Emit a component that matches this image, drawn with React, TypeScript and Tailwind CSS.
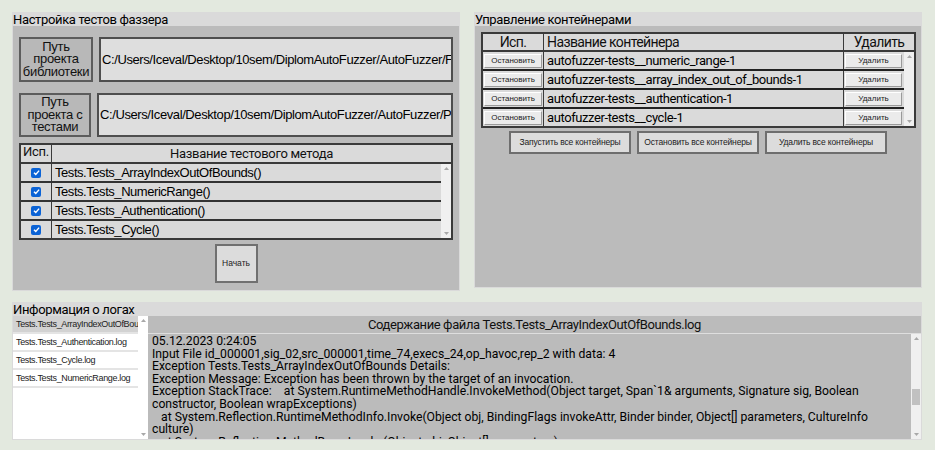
import React from 'react';

const tests = [
  'Tests.Tests_ArrayIndexOutOfBounds()',
  'Tests.Tests_NumericRange()',
  'Tests.Tests_Authentication()',
  'Tests.Tests_Cycle()',
];

const containers = [
  'autofuzzer-tests__numeric_range-1',
  'autofuzzer-tests__array_index_out_of_bounds-1',
  'autofuzzer-tests__authentication-1',
  'autofuzzer-tests__cycle-1',
];

const logFiles = [
  'Tests.Tests_ArrayIndexOutOfBounds.log',
  'Tests.Tests_Authentication.log',
  'Tests.Tests_Cycle.log',
  'Tests.Tests_NumericRange.log',
];

const logLines = [
  '05.12.2023 0:24:05',
  'Input File id_000001,sig_02,src_000001,time_74,execs_24,op_havoc,rep_2 with data: 4',
  'Exception Tests.Tests_ArrayIndexOutOfBounds Details:',
  'Exception Message: Exception has been thrown by the target of an invocation.',
  'Exception StackTrace:    at System.RuntimeMethodHandle.InvokeMethod(Object target, Span`1& arguments, Signature sig, Boolean',
  'constructor, Boolean wrapExceptions)',
  '   at System.Reflection.RuntimeMethodInfo.Invoke(Object obj, BindingFlags invokeAttr, Binder binder, Object[] parameters, CultureInfo',
  'culture)',
  '   at System.Reflection.MethodBase.Invoke(Object obj, Object[] parameters)',
];

const Arrow = ({ down }: { down?: boolean }) => (
  <svg width="5" height="3" viewBox="0 0 5 3">
    <path d={down ? 'M0 0 L2.5 3 L5 0Z' : 'M0 3 L2.5 0 L5 3Z'} fill="#a8a8a8" />
  </svg>
);

// simple fake scrollbar, no thumbTop -> no thumb
const ScrollBar = ({ bg = 'bg-[#f0f0f0]', thumbTop }: { bg?: string; thumbTop?: number }) => (
  <div className={`w-[10px] shrink-0 flex flex-col items-center py-[3px] ${bg}`}>
    <Arrow />
    <div className="flex-1 w-full px-px">
      {thumbTop !== undefined && (
        <div className="w-full h-[16px] bg-[#c1c1c1]" style={{ marginTop: thumbTop }} />
      )}
    </div>
    <Arrow down />
  </div>
);

const CheckBox = () => (
  <span className="w-[10px] h-[10px] rounded-[2px] bg-[#0b63d6] flex items-center justify-center">
    <svg viewBox="0 0 10 10" className="w-[9px] h-[9px]">
      <path d="M2.2 5.2 L4.2 7.1 L7.9 2.9" stroke="white" strokeWidth="1.6" fill="none" />
    </svg>
  </span>
);

const Panel = ({ title, className, children }: { title: string; className: string; children: React.ReactNode }) => (
  <section className={`flex flex-col bg-[#dadada] ${className}`}>
    <h2 className="h-[14px] pl-px text-[13px] leading-[15px] tracking-[-0.35px] font-['Roboto'] text-black">
      {title}
    </h2>
    <div className="flex-1 mx-px mb-px bg-[#bbbbbb] flex flex-col min-h-0">{children}</div>
  </section>
);

const PathRow = ({ label, path, btnW, className }: { label: string; path: string; btnW: string; className: string }) => (
  <div className={`flex gap-[6px] ${className}`}>
    <button className={`${btnW} shrink-0 bg-[#b8b8b8] border-2 border-[#5c5c5c] text-[13px] leading-[12.5px] tracking-[-0.3px] font-['Liberation_Sans'] text-[#111] whitespace-pre-line`}>
      {label}
    </button>
    <div className="flex-1 min-w-0 bg-[#dedede] border-2 border-[#4e4e4e] flex items-center pl-[1px] overflow-hidden">
      <span className="whitespace-nowrap text-[13px] tracking-[-0.4px] font-['Liberation_Sans'] text-black">{path}</span>
    </div>
  </div>
);

const SmallBtn = ({ text, className }: { text: string; className: string }) => (
  <button className={`h-[14px] bg-[#ebebeb] border border-[#9a9a9a] border-t-white border-l-white text-[8px] leading-[12px] font-['Liberation_Sans'] text-[#222] ${className}`}>
    {text}
  </button>
);

export default function App() {
  return (
    <div className="w-[935px] h-[450px] bg-[#e3e9df] pl-3 pt-3 overflow-hidden">
      <div className="flex gap-[14px] items-start">
        {/* Fuzzer test settings */}
        <Panel title="Настройка тестов фаззера" className="w-[448px] h-[279px]">
          <div className="px-[6px] pt-[11px] flex flex-col">
            <PathRow
              label={'Путь\nпроекта\nбиблиотеки'}
              path="C:/Users/Iceval/Desktop/10sem/DiplomAutoFuzzer/AutoFuzzer/Fuzzer"
              btnW="w-[74px]"
              className="h-[45px]"
            />
            <PathRow
              label={'Путь\nпроекта с\nтестами'}
              path="C:/Users/Iceval/Desktop/10sem/DiplomAutoFuzzer/AutoFuzzer/Project"
              btnW="w-[72px]"
              className="h-[44px] mt-[11px]"
            />

            <div className="mt-[6px] h-[97px] border-2 border-[#3a3a3a] bg-[#dadada] flex flex-col">
              <div className="h-[19px] flex border-b-2 border-[#3a3a3a] font-['Roboto'] text-[13px] tracking-[-0.3px] text-[#111]">
                <div className="w-[31px] border-r border-[#3a3a3a] leading-[13px] pl-[2px]">Исп.</div>
                <div className="flex-1 text-center leading-[18px]">Название тестового метода</div>
              </div>
              <div className="flex-1 flex min-h-0">
                <div className="flex-1 flex flex-col">
                  {tests.map((t, i) => (
                    <div key={i} className={`h-[19px] flex ${i < tests.length - 1 ? 'border-b-2 border-[#333]' : ''}`}>
                      <div className="w-[31px] border-r border-[#3a3a3a] flex items-center justify-center">
                        <CheckBox />
                      </div>
                      <div className="flex-1 pl-[3px] text-[13px] tracking-[-0.45px] leading-[17px] font-['Liberation_Sans'] text-black">
                        {t}
                      </div>
                    </div>
                  ))}
                </div>
                <ScrollBar />
              </div>
            </div>

            <button className="mt-[4px] mx-auto w-[43px] h-[39px] bg-[#dcdcdc] border-2 border-[#707070] text-[8.5px] font-['Liberation_Sans'] text-[#222]">
              Начать
            </button>
          </div>
        </Panel>

        {/* Container management */}
        <Panel title="Управление контейнерами" className="w-[448px] h-[276px]">
          <div className="pl-[6px] pr-[5px] pt-[6px] flex flex-col">
            <div className="h-[96px] border-2 border-[#3a3a3a] bg-[#dadada] flex flex-col">
              <div className="h-[18px] flex border-b-2 border-[#3a3a3a] font-['Roboto'] text-[14px] tracking-[-0.6px] leading-[17px] text-[#111]">
                <div className="w-[61px] border-r border-[#3a3a3a] text-center">Исп.</div>
                <div className="w-[300px] border-r border-[#3a3a3a] pl-[3px]">Название контейнера</div>
                <div className="flex-1 text-center">Удалить</div>
              </div>
              <div className="flex-1 flex min-h-0">
                <div className="flex-1 flex flex-col">
                  {containers.map((c, i) => (
                    <div key={i} className={`h-[19px] flex items-center ${i < containers.length - 1 ? 'border-b-2 border-[#222]' : ''}`}>
                      <div className="w-[61px] h-full border-r border-[#3a3a3a] flex items-center px-[1px]">
                        <SmallBtn text="Остановить" className="w-full" />
                      </div>
                      <div className="w-[300px] h-full border-r border-[#3a3a3a] pl-[3px] font-['Roboto'] text-[13px] tracking-[-0.4px] leading-[17px] text-black">
                        {c}
                      </div>
                      <div className="flex-1 h-full flex items-center pl-px pr-[2px]">
                        <SmallBtn text="Удалить" className="w-full" />
                      </div>
                    </div>
                  ))}
                </div>
                <ScrollBar />
              </div>
            </div>
            <div className="mt-[3px] flex justify-center gap-[6px] pr-px">
              {['Запустить все контейнеры', 'Остановить все контейнеры', 'Удалить все контейнеры'].map((b) => (
                <button
                  key={b}
                  className="w-[122px] h-[23px] bg-[#dcdcdc] border-2 border-[#6e6e6e] text-[8.5px] tracking-[-0.15px] font-['Liberation_Sans'] text-[#222]"
                >
                  {b}
                </button>
              ))}
            </div>
          </div>
        </Panel>
      </div>

      {/* Logs */}
      <Panel title="Информация о логах" className="w-[910px] h-[138px] mt-[11px]">
        <div className="flex-1 flex min-h-0">
          <div className="w-[135px] bg-white flex">
            <div className="flex-1 min-w-0 flex flex-col">
              {logFiles.map((f, i) => (
                <div
                  key={f}
                  className={`h-[18px] pl-[3px] border-b-2 border-[#e4e4e4] whitespace-nowrap overflow-hidden text-[9px] leading-[16px] tracking-[-0.35px] font-['Liberation_Sans'] text-[#222] ${i === 0 ? 'bg-[#d2d2d2]' : ''}`}
                >
                  {f}
                </div>
              ))}
            </div>
            <ScrollBar bg="bg-white" />
          </div>
          <div className="flex-1 flex flex-col min-w-0">
            <div className="h-[18px] border-b border-[#dedede] text-center font-['Roboto'] text-[13px] tracking-[-0.4px] leading-[18px] text-[#111]">
              Содержание файла Tests.Tests_ArrayIndexOutOfBounds.log
            </div>
            <div className="flex-1 flex min-h-0 overflow-hidden">
              <div className="flex-1 min-w-0 pl-[4px] pt-px overflow-hidden font-['Roboto'] text-[12.2px] leading-[12.6px] text-black">
                {logLines.map((l, i) => (
                  <div key={i} className="whitespace-pre">{l}</div>
                ))}
              </div>
              <ScrollBar thumbTop={49} />
            </div>
          </div>
        </div>
      </Panel>
    </div>
  );
}
